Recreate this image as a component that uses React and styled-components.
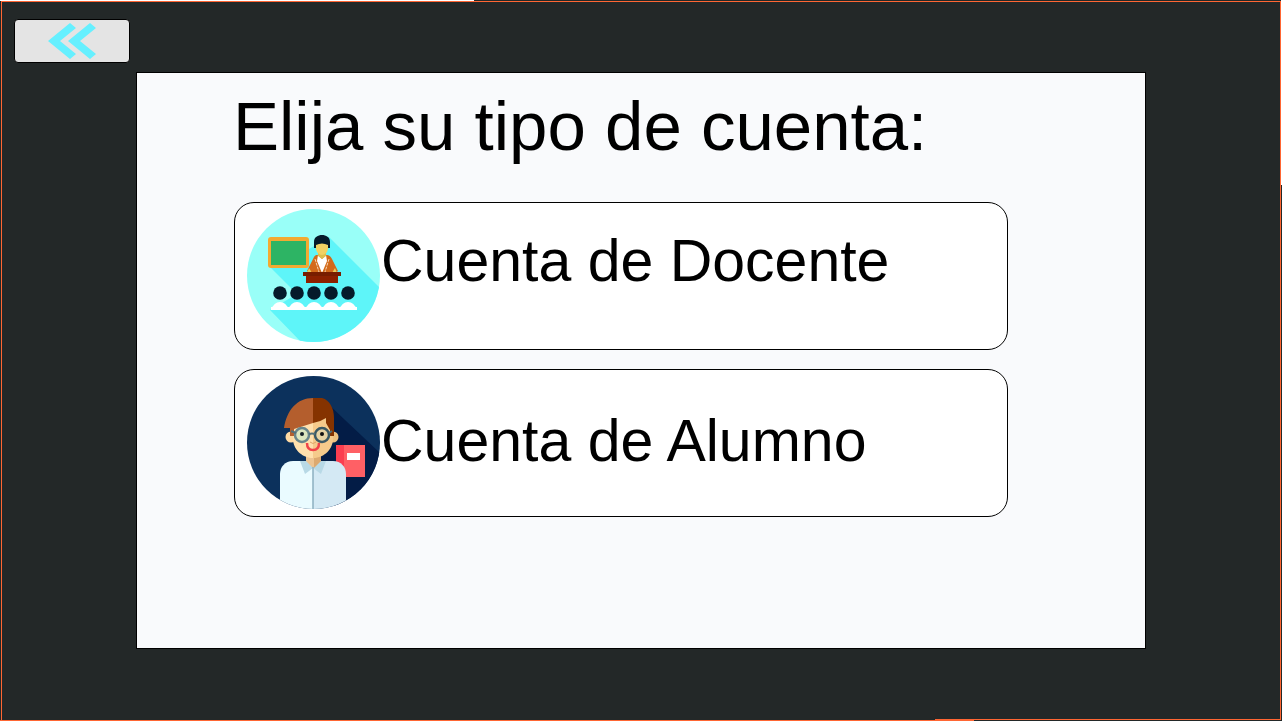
import React from "react";
import styled, { createGlobalStyle } from "styled-components";

const GlobalStyle = createGlobalStyle`
  *, *::before, *::after { box-sizing: border-box; }
  body {
    margin: 0;
    background: #232828;
    font-family: "Liberation Sans", Arial, sans-serif;
    color: #000;
  }
`;

const Page = styled.div`
  display: flex;
  min-height: 100vh;
  padding: 1px;
  background:
    linear-gradient(#fff, #fff) 0 0 / 37% 1px no-repeat,
    linear-gradient(#fff, #fff) 100% 0 / 1px 185px no-repeat,
    linear-gradient(#ff6633, #ff6633) 0 100% / 76% 1px no-repeat,
    #232828;
`;

const Frame = styled.div`
  flex: 1;
  display: flex;
  flex-direction: column;
  border: 1px solid #ff6633;
  border-bottom: 0;
  background:
    linear-gradient(#ff6633, #ff6633) 100% 100% / 27% 1px no-repeat,
    #232828;
`;

const TopBar = styled.header`
  display: flex;
  padding: 17px 12px 9px;
`;

const BackButton = styled.button`
  display: flex;
  align-items: center;
  justify-content: center;
  width: 116px;
  height: 44px;
  padding: 0;
  border: 1px solid #000;
  border-radius: 4px;
  background: #e4e4e4;
  cursor: pointer;
`;

const Panel = styled.main`
  flex: 1;
  margin: 0 134px 71px;
  padding: 14px 137px 16px 97px;
  border: 1px solid #000;
  background: #f9fafc;
`;

const Title = styled.h1`
  margin: 0 0 35px;
  font-size: 69px;
  line-height: 80px;
  font-weight: 400;
  text-indent: -1px;
  white-space: nowrap;
`;

const Options = styled.div`
  display: grid;
  gap: 19px;
`;

const Option = styled.button`
  display: flex;
  align-items: ${(p) => p.$align};
  width: 100%;
  padding: 6px 12px;
  border: 1px solid #000;
  border-radius: 20px;
  background: #fff;
  color: #000;
  font-family: inherit;
  text-align: left;
  cursor: pointer;
`;

const OptionLabel = styled.span`
  padding-bottom: 4px;
  font-size: 59px;
  line-height: 104px;
  white-space: nowrap;
`;

const Picture = styled.svg`
  display: block;
  flex: none;
  width: 134px;
  height: 134px;
`;

const BackIcon = () => (
  <svg width="50" height="38" viewBox="0 0 50 38" aria-hidden="true">
    <path
      d="M23 1 29 6 13 19 29 32 23 37 1 19ZM43 1 49 6 33 19 49 32 43 37 21 19Z"
      fill="#66f0ff"
    />
  </svg>
);

const TeacherPicture = () => (
  <Picture viewBox="0 0 134 134" aria-hidden="true">
    <defs>
      <clipPath id="teacher-disc">
        <circle cx="66.5" cy="66.5" r="66.5" />
      </clipPath>
    </defs>
    <g clipPath="url(#teacher-disc)">
      <path d="M0 0h134v134H0z" fill="#99fff8" />
      <path d="M82 28 134 80V134H55L23 101 50 85 24 59 62 40Z" fill="#5ef5f9" />
    </g>
    <rect x="21" y="28" width="41" height="31" rx="3" fill="#f3aa32" />
    <path d="M24 32h35v24H24z" fill="#2db464" />
    <path d="M69 46h11q3 0 5 4l6 12-3 2H63l-3-2 6-12q1-3 3-4Z" fill="#d36a1b" />
    <path d="m71 46 4 4 4-4 1 6-5 12-5-12Z" fill="#fff" />
    <path d="m68 50 4 13M82 50l-4 13" stroke="#f6d9b8" strokeDasharray="3 1" fill="none" />
    <path d="m62 59 3 5H60ZM88 59l-3 5h5Z" fill="#e9cd5c" />
    <path d="M71 40h8v7l-4 3-4-3Z" fill="#dfbe4b" />
    <path d="M69 34h12v5c0 4-3 7-6 7s-6-3-6-7Z" fill="#f1d163" />
    <path d="M67 39v-6c0-5 4-7 8-7s8 2 8 7v6h-2v-3c-4-2-8-2-12 0v3Z" fill="#051b2b" />
    <path d="M59 63h32v11H59z" fill="#8c2100" />
    <path d="M56 63h38v4H56z" fill="#781d00" />
    {[33, 50, 67, 84, 101].map((x) => (
      <g key={x}>
        <circle cx={x} cy="84" r="6.8" fill="#051b2b" />
        <path d={`M${x - 9} 101q3-8 9-8t9 8Z`} fill="#fff" />
      </g>
    ))}
    <path d="M24 98h86v3H24z" fill="#fff" />
  </Picture>
);

const StudentPicture = () => (
  <Picture viewBox="0 0 134 134" aria-hidden="true">
    <defs>
      <clipPath id="student-disc">
        <circle cx="66.5" cy="66.5" r="66.5" />
      </clipPath>
    </defs>
    <g clipPath="url(#student-disc)">
      <path d="M0 0h134v134H0z" fill="#0c315c" />
      <path d="M80 27 134 78V134H90L66 90Z" fill="#031c46" />
      <path d="M89 69h29v32H89z" fill="#ff6065" />
      <path d="M89 69h8v32h-8z" fill="#fb3e50" />
      <path d="M100 77h13v7h-13z" fill="#fff" />
      <path d="M33 134V98c0-7 5-13 13-13h21v49Z" fill="#eafbff" />
      <path d="M66 134V85h20c8 0 13 6 13 13v36Z" fill="#d4e9f4" />
      <path d="m53 85 5 13 8-6 8 6 5-13Z" fill="#b8d9e6" />
      <path d="M59 77h15v8l-8 7-7-7Z" fill="#edc492" />
      <path d="M67 77h7v8l-7 7Z" fill="#dca970" />
      <path d="M66 91v43" stroke="#8cafc1" strokeWidth="1.5" />
      <circle cx="44" cy="61" r="5.5" fill="#ffdaa3" />
      <circle cx="86" cy="61" r="5.5" fill="#edc07f" />
      <path d="M45 45h21v37c-12 0-20-10-20-19Z" fill="#ffe0ad" />
      <path d="M66 40h20v23c0 9-8 19-20 19Z" fill="#f5ca8b" />
      <path d="M37 52C40 34 50 22 66 22v25l-19 6v7h-4v-8Z" fill="#b45e2d" />
      <path d="M66 22h9c8 2 12 11 12 20v18h-4v-6l-4-7v-5q-6 4-13 5Z" fill="#853300" />
      <circle cx="55" cy="59" r="7" fill="#dce6bf" stroke="#69868b" strokeWidth="2.5" />
      <circle cx="75" cy="59" r="7" fill="#e6d3a4" stroke="#3b5964" strokeWidth="2.5" />
      <path d="M62 58q3-1 6 0M49 57l-5-2M82 57l3-2" stroke="#526f78" strokeWidth="2" fill="none" />
      <circle cx="55" cy="58" r="2" fill="#172229" />
      <circle cx="75" cy="58" r="2" fill="#111" />
      <path d="M60 67q0 7 6 7t6-7" fill="none" stroke="#f14449" strokeWidth="2.5" />
      <path d="M63 66q3 3 6 0" fill="none" stroke="#dfa569" />
    </g>
  </Picture>
);

export default function App() {
  return (
    <>
      <GlobalStyle />
      <Page>
        <Frame>
          <TopBar>
            <BackButton type="button" aria-label="Volver">
              <BackIcon />
            </BackButton>
          </TopBar>
          <Panel>
            <Title>Elija su tipo de cuenta:</Title>
            <Options>
              <Option type="button" $align="flex-start">
                <TeacherPicture />
                <OptionLabel>Cuenta de Docente</OptionLabel>
              </Option>
              <Option type="button" $align="center">
                <StudentPicture />
                <OptionLabel>Cuenta de Alumno</OptionLabel>
              </Option>
            </Options>
          </Panel>
        </Frame>
      </Page>
    </>
  );
}
